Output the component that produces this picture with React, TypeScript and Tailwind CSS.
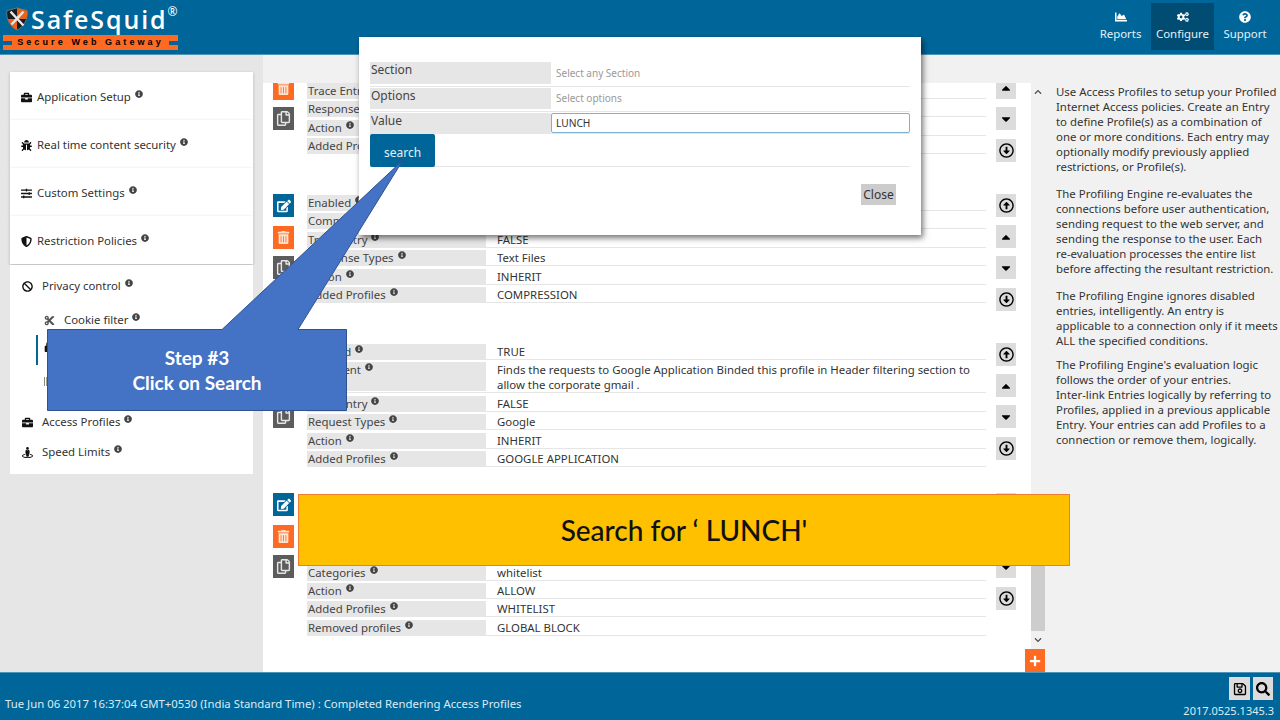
import React from 'react';
import {
  FaBan,
  FaBriefcase,
  FaBug,
  FaCaretDown,
  FaCaretUp,
  FaChartArea,
  FaChevronDown,
  FaChevronUp,
  FaCogs,
  FaCut,
  FaEdit,
  FaInfoCircle,
  FaLock,
  FaPlus,
  FaQuestionCircle,
  FaRegArrowAltCircleDown,
  FaRegArrowAltCircleUp,
  FaRegCopy,
  FaRegSave,
  FaSearch,
  FaShieldAlt,
  FaSlidersH,
  FaStreetView,
  FaTrashAlt,
} from 'react-icons/fa';

const Info = () => <FaInfoCircle className="inline-block text-[8px] text-[#444] ml-1 -mt-2" />;

const Logo = () => (
  <div className="pl-[3px] pt-[4px] w-[180px]">
    <div className="flex items-center h-[30px]">
      <svg width="24" height="26" viewBox="0 0 26 26" className="ml-[2px] shrink-0">
        <path d="M13 1 L24 4 C25 13 21 21 13 25 C5 21 1 13 2 4 Z" fill="#1b1b1b" stroke="#5a7f95" />
        <path d="M13 1 L24 4 C24.5 8 24 10 23 13 L13 13 Z" fill="#e8641c" />
        <path d="M13 13 L3 13 C5 19 8 23 13 25 Z" fill="#e8641c" />
        <path d="M6 5 L20 20 M20 5 L7 19" stroke="#e8e8e8" strokeWidth="2.5" />
      </svg>
      <span className="ml-[2px] text-[25px] leading-[30px] text-white font-semibold tracking-[1.9px] font-['Open_Sans',sans-serif]">
        SafeSquid
      </span>
      <span className="text-[12px] text-white self-start -mt-[1px]">®</span>
    </div>
    <div className="mt-[1px] w-[175px] h-[15px] bg-[#ff6a22] flex items-center justify-between">
      <span className="w-[9px] h-[4px] bg-[#006699]" />
      <span className="text-[9px] font-bold tracking-[3.1px] text-black font-['Liberation_Sans',sans-serif]">
        Secure Web Gateway
      </span>
      <span className="w-[9px] h-[4px] bg-[#006699]" />
    </div>
  </div>
);

const NavItem = ({ icon, label, width, active }: { icon: React.ReactNode; label: string; width: string; active?: boolean }) => (
  <div
    className={`flex flex-col items-center justify-center h-[47px] mt-[3px] pb-[2px] text-[11.4px] text-[#e6f0f5] ${width} ${
      active ? 'bg-[#004c73]' : ''
    }`}
  >
    <span className="text-[12px] text-white h-[17px] flex items-center">{icon}</span>
    <span className="leading-[18px]">{label}</span>
  </div>
);

const SideCard = ({ icon, label }: { icon: React.ReactNode; label: string }) => (
  <div className="h-[48px] bg-white flex items-center pl-[11px] pt-[2px] text-[11.4px] text-[#333] shadow-[0_1px_3px_rgba(0,0,0,0.22)]">
    <span className="w-[16px] text-[11px] text-[#111]">{icon}</span>
    <span>
      {label}
      <Info />
    </span>
  </div>
);

const SideLink = ({ icon, label, className }: { icon: React.ReactNode; label: string; className: string }) => (
  <div className={`flex items-center text-[11.4px] text-[#333] ${className}`}>
    <span className="w-[20px] text-[11px] text-[#111]">{icon}</span>
    <span>
      {label}
      <Info />
    </span>
  </div>
);

type Row = { label: string; value: string; tall?: boolean; short?: boolean };

const labelHeight = (row: Row) => {
  if (row.tall) return 'h-[29px]';
  if (row.short) return 'h-[12px] overflow-hidden';
  return 'h-[15px]';
};

const Entry = ({ rows, height }: { rows: Row[]; height: string }) => (
  <div className={`flex ${height}`}>
    <div className="w-[44px] pl-[10px] flex flex-col">
      <div className="w-[21px] h-[23px] bg-[#006699] text-white flex items-center justify-center text-[14px]">
        <FaEdit />
      </div>
      <div className="w-[21px] h-[23px] mt-[9px] bg-[#ff6a22] text-[#ffe3cf] flex items-center justify-center text-[13px]">
        <FaTrashAlt />
      </div>
      <div className="w-[21px] h-[23px] mt-[7px] bg-[#5c5c5c] text-[#e6e6e6] flex items-center justify-center text-[15px]">
        <FaRegCopy />
      </div>
    </div>
    <div className="w-[679px] pt-[1px]">
      {rows.map((row) => (
        <div key={row.label} className="flex border-b border-[#e6e6e6] mb-[2.4px] text-[11.4px] leading-[15px]">
          <div className={`w-[179px] bg-[#e6e6e6] text-[#444] pl-[1px] ${labelHeight(row)}`}>
            {row.label}
            <Info />
          </div>
          <div className="flex-1 pl-[11px] text-[#333]">{row.value}</div>
        </div>
      ))}
    </div>
    <div className="w-[20px] ml-[10px] flex flex-col text-black">
      <div className="h-[23px] bg-[#dcdcdc] flex items-center justify-center text-[15px]">
        <FaRegArrowAltCircleUp />
      </div>
      <div className="h-[23px] mt-[8px] bg-[#dcdcdc] flex items-center justify-center text-[14px]">
        <FaCaretUp />
      </div>
      <div className="h-[23px] mt-[8px] bg-[#dcdcdc] flex items-center justify-center text-[14px]">
        <FaCaretDown />
      </div>
      <div className="h-[23px] mt-[9px] bg-[#dcdcdc] flex items-center justify-center text-[15px]">
        <FaRegArrowAltCircleDown />
      </div>
    </div>
  </div>
);

const baseRows = (types: Row, value: string): Row[] => [
  { label: 'Enabled', value: 'TRUE' },
  { label: 'Comment', value: '' },
  { label: 'Trace Entry', value: 'FALSE' },
  types,
  { label: 'Action', value: 'INHERIT' },
  { label: 'Added Profiles', value },
];

const entries: { rows: Row[]; height: string }[] = [
  { rows: baseRows({ label: 'Response Types', value: 'Text Files' }, 'COMPRESSION'), height: 'h-[149px]' },
  { rows: baseRows({ label: 'Response Types', value: 'Text Files' }, 'COMPRESSION'), height: 'h-[149px]' },
  {
    rows: [
      { label: 'Enabled', value: 'TRUE' },
      {
        label: 'Comment',
        tall: true,
        value:
          'Finds the requests to Google Application Binded this profile in Header filtering section to allow the corporate gmail .',
      },
      { label: 'Trace Entry', value: 'FALSE' },
      { label: 'Request Types', value: 'Google' },
      { label: 'Action', value: 'INHERIT' },
      { label: 'Added Profiles', value: 'GOOGLE APPLICATION' },
    ],
    height: 'h-[150px]',
  },
  {
    rows: [
      { label: 'Enabled', value: 'TRUE' },
      { label: 'Comment', value: '', short: true },
      { label: 'Trace Entry', value: 'FALSE' },
      { label: 'Request Types', value: '' },
      { label: 'Categories', value: 'whitelist' },
      { label: 'Action', value: 'ALLOW' },
      { label: 'Added Profiles', value: 'WHITELIST' },
      { label: 'Removed profiles', value: 'GLOBAL BLOCK' },
    ],
    height: 'h-[160px]',
  },
];

const helpText = [
  [
    'Use Access Profiles to setup your Profiled',
    'Internet Access policies. Create an Entry',
    'to define Profile(s) as a combination of',
    'one or more conditions. Each entry may',
    'optionally modify previously applied',
    'restrictions, or Profile(s).',
  ],
  [
    'The Profiling Engine re-evaluates the',
    'connections before user authentication,',
    'sending request to the web server, and',
    'sending the response to the user. Each',
    're-evaluation processes the entire list',
    'before affecting the resultant restriction.',
  ],
  [
    'The Profiling Engine ignores disabled',
    'entries, intelligently. An entry is',
    'applicable to a connection only if it meets',
    'ALL the specified conditions.',
  ],
  [
    "The Profiling Engine's evaluation logic",
    'follows the order of your entries.',
    'Inter-link Entries logically by referring to',
    'Profiles, applied in a previous applicable',
    'Entry. Your entries can add Profiles to a',
    'connection or remove them, logically.',
  ],
];

const SearchModal = () => (
  <div className="absolute left-[359px] top-[37px] w-[562px] h-[198px] bg-white shadow-[2px_3px_6px_rgba(0,0,0,0.55)] pt-[25px] px-[11px] text-[12px]">
    <div className="w-[540px] flex h-[25px] border-b border-[#e6e6e6]">
      <div className="w-[181px] h-[22px] bg-[#e6e6e6] text-[#444] pl-[1px] leading-[16px]">Section</div>
      <div className="pl-[5px] pt-[4px] text-[10px] text-[#999]">Select any Section</div>
    </div>
    <div className="w-[540px] flex h-[25px] border-b border-[#e6e6e6]">
      <div className="w-[181px] h-[21px] mt-[1px] bg-[#e6e6e6] text-[#444] pl-[1px] leading-[16px]">Options</div>
      <div className="pl-[5px] pt-[4px] text-[10px] text-[#999]">Select options</div>
    </div>
    <div className="w-[540px] flex h-[22px] border-b border-[#e6e6e6]">
      <div className="w-[181px] h-[20px] mt-[1px] bg-[#e6e6e6] text-[#444] pl-[1px] leading-[16px]">Value</div>
      <div className="flex-1 h-[20px] mt-[1px] border border-[#7fb2cf] rounded-[2px] pl-[4px] text-[10.2px] leading-[18px] text-[#333]">
        LUNCH
      </div>
    </div>
    <div className="w-[540px] h-[33px] border-b border-[#e6e6e6]">
      <div className="w-[65px] h-[33px] pt-[5px] bg-[#006699] rounded-[2px] text-[#e6f0f5] text-[12px] flex items-center justify-center">
        search
      </div>
    </div>
    <div className="w-[526px] flex justify-end mt-[17px]">
      <div className="w-[35px] h-[21px] bg-[#cccccc] text-[#333] flex items-center justify-center">Close</div>
    </div>
  </div>
);

const StepCallout = () => (
  <>
    <svg className="absolute left-0 top-0 pointer-events-none" width="1280" height="720">
      <polygon
        points="47.5,329.5 222,329.5 403,160 298,329.5 346.5,329.5 346.5,410.5 47.5,410.5"
        fill="#4472c4"
        stroke="#2f528f"
        strokeWidth="1"
      />
    </svg>
    <div className="absolute left-[47px] top-[345px] w-[300px] text-center text-white text-[19px] leading-[25px] font-bold font-['Lato',sans-serif]">
      <div>Step #3</div>
      <div>Click on Search</div>
    </div>
  </>
);

const App = () => {
  return (
    <div className="relative w-[1280px] h-[720px] overflow-hidden bg-white font-['Noto_Sans',sans-serif]">
      <header className="h-[55px] bg-[#006699] border-b border-[#4d94b8] flex justify-between">
        <Logo />
        <nav className="flex pr-[4px]">
          <NavItem icon={<FaChartArea />} label="Reports" width="w-[61px]" />
          <NavItem icon={<FaCogs />} label="Configure" width="w-[63px]" active />
          <NavItem icon={<FaQuestionCircle />} label="Support" width="w-[62px]" />
        </nav>
      </header>

      <div className="flex h-[617px]">
        <aside className="w-[263px] shrink-0 bg-[#e6e6e6] pt-[17px] px-[10px]">
          <SideCard icon={<FaBriefcase />} label="Application Setup" />
          <SideCard icon={<FaBug />} label="Real time content security" />
          <SideCard icon={<FaSlidersH />} label="Custom Settings" />
          <SideCard icon={<FaShieldAlt />} label="Restriction Policies" />
          <div className="h-[209px] mt-[1px] bg-white pl-[12px] pt-[13px]">
            <SideLink icon={<FaBan />} label="Privacy control" className="h-[16px]" />
            <SideLink icon={<FaCut />} label="Cookie filter" className="h-[16px] mt-[18px] ml-[22px] [&>span:first-child]:text-[#555]" />
            <div className="h-[30px] mt-[7px] ml-[14px] border-l-2 border-[#006699] pl-[6px] pt-[6px] text-[11px] text-[#111]">
              <FaLock />
            </div>
            <div className="h-[16px] mt-[8px] ml-[22px] flex gap-[1px] items-center">
              <span className="w-[1px] h-[9px] bg-[#888]" />
              <span className="w-[1px] h-[9px] bg-[#9a8]" />
              <span className="w-[2px] h-[9px] bg-[#c96]" />
            </div>
            <SideLink icon={<FaBriefcase />} label="Access Profiles" className="h-[16px] mt-[25px]" />
            <SideLink icon={<FaStreetView />} label="Speed Limits" className="h-[16px] mt-[14px]" />
          </div>
        </aside>

        <main className="relative w-[782px] shrink-0 flex flex-col">
          <div className="h-[28px] bg-[#f1f1f1] shrink-0" />
          <div className="flex flex-1 min-h-0">
            <div className="w-[768px] overflow-hidden">
              <div className="-mt-[38px]">
                {entries.map((entry, index) => (
                  <Entry key={index} rows={entry.rows} height={entry.height} />
                ))}
              </div>
            </div>
            <div className="w-[14px] h-[566px] bg-[#f1f1f1] flex flex-col items-center text-[#505050] text-[8px]">
              <div className="h-[17px] flex items-center">
                <FaChevronUp />
              </div>
              <div className="flex-1" />
              <div className="w-[14px] h-[130px] bg-[#cdcdcd]" />
              <div className="h-[18px] flex items-center">
                <FaChevronDown />
              </div>
            </div>
          </div>
          <div className="absolute right-0 bottom-0 w-[20px] h-[23px] bg-[#ff6a22] text-white text-[12px] flex items-center justify-center">
            <FaPlus />
          </div>
        </main>

        <aside className="w-[235px] shrink-0 bg-[#f1f1f1] pl-[11px] pt-[29px] text-[11.4px] leading-[15px] text-[#333]">
          {helpText.map((lines, index) => (
            <p key={index} className={`whitespace-nowrap ${index === 2 ? 'mb-[9px]' : 'mb-[12px]'}`}>
              {lines.map((line) => (
                <span key={line} className="block">
                  {line}
                </span>
              ))}
            </p>
          ))}
        </aside>
      </div>

      <footer className="h-[48px] bg-[#006699] border-t border-[#4d94b8] flex justify-between pl-[5px] pr-[6px] text-[11.35px] text-[#dcebf3]">
        <div className="pt-[22px]">
          Tue Jun 06 2017 16:37:04 GMT+0530 (India Standard Time) : Completed Rendering Access Profiles
        </div>
        <div className="flex flex-col items-end pt-[4px]">
          <div className="flex gap-[3px] text-black mr-[1px]">
            <div className="w-[21px] h-[23px] bg-[#dcdcdc] flex items-center justify-center text-[14px]">
              <FaRegSave />
            </div>
            <div className="w-[20px] h-[23px] bg-[#dcdcdc] flex items-center justify-center text-[14px]">
              <FaSearch />
            </div>
          </div>
          <div className="mt-[3px] leading-[15px] text-[11px]">2017.0525.1345.3</div>
        </div>
      </footer>

      <SearchModal />
      <StepCallout />

      <div className="absolute left-[298px] top-[494px] w-[772px] h-[72px] bg-[#ffc000] border border-[#ed7d31] flex items-center justify-center text-[28px] font-medium text-[#111] font-['Lato',sans-serif]">
        Search for ‘ LUNCH'
      </div>
    </div>
  );
};

export default App;
